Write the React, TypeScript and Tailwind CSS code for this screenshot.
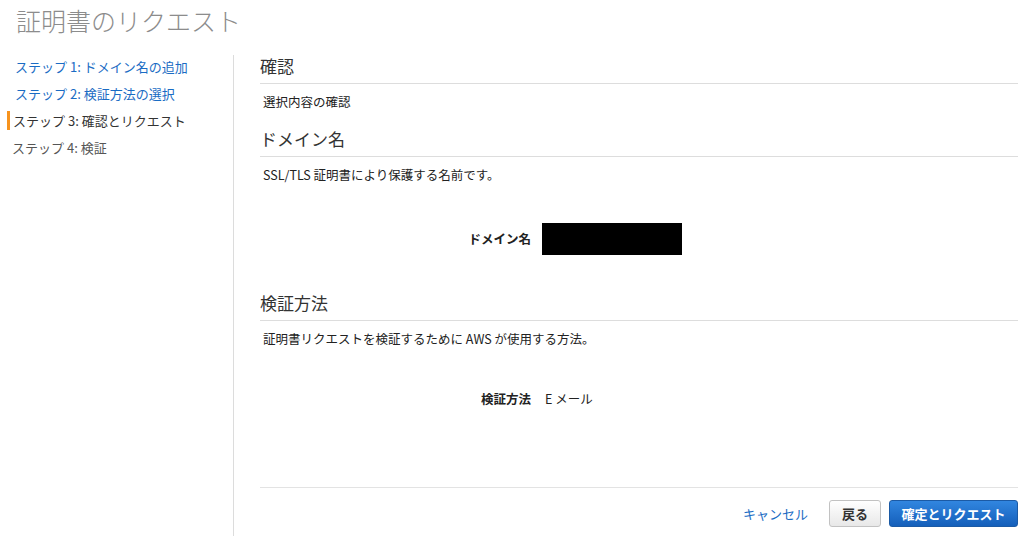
import { ReactNode } from 'react'

const font = { fontFamily: '"Noto Sans CJK JP", "Noto Sans", "Liberation Sans", sans-serif' }

const steps = [
  { label: 'ステップ 1: ドメイン名の追加', state: 'done' },
  { label: 'ステップ 2: 検証方法の選択', state: 'done' },
  { label: 'ステップ 3: 確認とリクエスト', state: 'current' },
  { label: 'ステップ 4: 検証', state: 'todo' },
]

function SectionHeading({ children, className = '' }: { children: ReactNode; className?: string }) {
  return (
    <div className={`text-[17px] leading-[22px] text-[#333] pb-[6px] border-b border-[#ddd] ${className}`}>
      {children}
    </div>
  )
}

function Desc({ children }: { children: ReactNode }) {
  return <div className="mt-[9px] pl-[3px] text-[12.5px] leading-[18px] text-[#222]">{children}</div>
}

function Field({ label, children, className = '' }: { label: string; children: ReactNode; className?: string }) {
  return (
    <div className={`flex items-center ${className}`}>
      <div className="w-[271px] text-right text-[12.5px] leading-[18px] font-bold text-[#222]">{label}</div>
      {children}
    </div>
  )
}

export default function App() {
  return (
    <div className="w-[1024px] h-[536px] bg-white overflow-hidden flex flex-col" style={font}>
      <div className="h-[55px] pl-[16px] pt-[4px]">
        <h1 className="text-[25px] leading-[32px] font-light text-[#8c8c8c]">証明書のリクエスト</h1>
      </div>

      <div className="flex flex-1">
        <nav className="w-[233px] flex flex-col -mt-[2px]">
          {steps.map(step => (
            <div key={step.label} className="h-[27px] flex items-center">
              {step.state === 'current' ? (
                <span className="flex items-center h-full">
                  <span className="w-[3px] h-[19px] bg-[#f7931e] ml-[7px] mr-[3px]" />
                  <span className="text-[13px] text-[#333]">{step.label}</span>
                </span>
              ) : step.state === 'done' ? (
                <span className="pl-[15px] text-[13px] text-[#1a6cc4]">{step.label}</span>
              ) : (
                <span className="pl-[12px] text-[13px] text-[#555]">{step.label}</span>
              )}
            </div>
          ))}
        </nav>

        <main className="flex-1 border-l border-[#dcdcdc] pl-[26px] pr-[6px]">
          <SectionHeading>確認</SectionHeading>
          <Desc>選択内容の確認</Desc>

          <SectionHeading className="mt-[17px]">ドメイン名</SectionHeading>
          <Desc>SSL/TLS 証明書により保護する名前です。</Desc>

          <Field label="ドメイン名" className="mt-[39px] h-[32px]">
            <div className="ml-[11px] w-[140px] h-[32px] bg-black" />
          </Field>

          <SectionHeading className="mt-[37px]">検証方法</SectionHeading>
          <Desc>証明書リクエストを検証するために AWS が使用する方法。</Desc>

          <Field label="検証方法" className="mt-[42px]">
            <div className="ml-[14px] text-[12.5px] leading-[18px] text-[#222]">E メール</div>
          </Field>

          <div className="mt-[79px] border-t border-[#e3e3e3] pt-[12px] flex items-center justify-end">
            <button type="button" className="text-[13px] text-[#1a6cc4] mr-[21px]">キャンセル</button>
            <button
              type="button"
              className="h-[27px] w-[52px] rounded-[3px] border border-[#c2c2c2] bg-gradient-to-b from-white to-[#e8e8e8] text-[13px] font-bold text-[#333]"
            >
              戻る
            </button>
            <button
              type="button"
              className="ml-[8px] h-[27px] w-[129px] rounded-[3px] border border-[#1b5aa5] bg-gradient-to-b from-[#3186e0] to-[#145fba] text-[13px] font-bold text-white"
            >
              確定とリクエスト
            </button>
          </div>
        </main>
      </div>
    </div>
  )
}
